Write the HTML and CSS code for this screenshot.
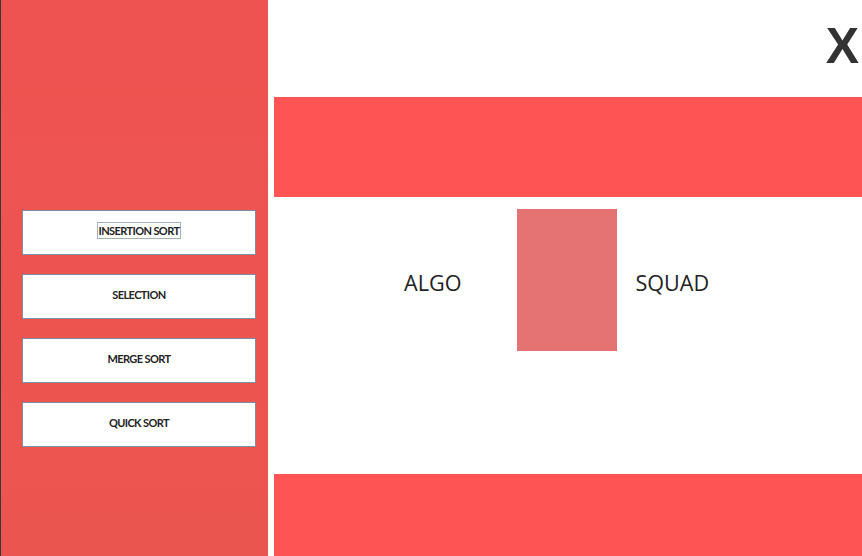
FILE: index.html
```html
<!DOCTYPE html>
<html>
<head>
<meta charset="utf-8">
<link rel="stylesheet" href="styles.css">
</head>
<body>
<div class="app">
  <aside class="sidebar">
    <button class="sort-btn"><span class="label focused">INSERTION SORT</span></button>
    <button class="sort-btn"><span class="label">SELECTION</span></button>
    <button class="sort-btn"><span class="label">MERGE SORT</span></button>
    <button class="sort-btn"><span class="label">QUICK SORT</span></button>
  </aside>
  <main class="main">
    <header class="topbar"><span class="close">X</span></header>
    <div class="band band-top"></div>
    <section class="hero">
      <span class="word word-algo">ALGO</span>
      <div class="logo-block"></div>
      <span class="word word-squad">SQUAD</span>
    </section>
    <div class="band band-bottom"></div>
  </main>
</div>
</body>
</html>
```
FILE: styles.css
```css
html, body {
  margin: 0;
  padding: 0;
  background: #ffffff;
  overflow: hidden;
}
.app {
  display: flex;
  width: 862px;
  height: 556px;
}
.sidebar {
  width: 268px;
  flex: none;
  border-left: 1px solid #3a3a3a;
  background: linear-gradient(180deg, #ef5351 0%, #eb5550 100%);
  padding: 210px 0 0 21px;
  box-sizing: border-box;
  display: flex;
  flex-direction: column;
  gap: 19px;
}
.sort-btn {
  width: 234px;
  height: 45px;
  box-sizing: border-box;
  background: #ffffff;
  border: 1px solid #7d8ea3;
  margin: 0;
  padding: 0 0 5px 0;
  display: flex;
  align-items: center;
  justify-content: center;
  font-family: Lato, "Open Sans", sans-serif;
  font-size: 11px;
  font-weight: 700;
  letter-spacing: -0.6px;
  color: #222;
}
.label {
  padding: 1px 1px;
  border: 1px solid transparent;
  line-height: 13px;
}
.label.focused {
  border-color: #a3afc0;
}
.main {
  flex: 1;
  padding-left: 6px;
  display: flex;
  flex-direction: column;
  min-width: 0;
}
.topbar {
  height: 97px;
  display: flex;
  justify-content: flex-end;
  align-items: flex-start;
}
.close {
  font-family: "Liberation Sans", Arial, sans-serif;
  font-weight: 700;
  font-size: 50px;
  line-height: 1;
  color: #333333;
  margin-top: 21px;
  margin-right: 3px;
}
.band {
  background: #ff5454;
  flex: none;
}
.band-top {
  height: 100px;
}
.hero {
  height: 277px;
  display: flex;
  align-items: flex-start;
  box-sizing: border-box;
  padding-top: 12px;
}
.word {
  font-family: "Open Sans", sans-serif;
  font-size: 21.6px;
  color: #222222;
  margin-top: 59px;
}
.word-algo {
  margin-left: 130px;
}
.logo-block {
  width: 100px;
  height: 142px;
  background: #e57373;
  margin-left: 56px;
}
.word-squad {
  margin-left: 18px;
}
.band-bottom {
  height: 82px;
}
```
